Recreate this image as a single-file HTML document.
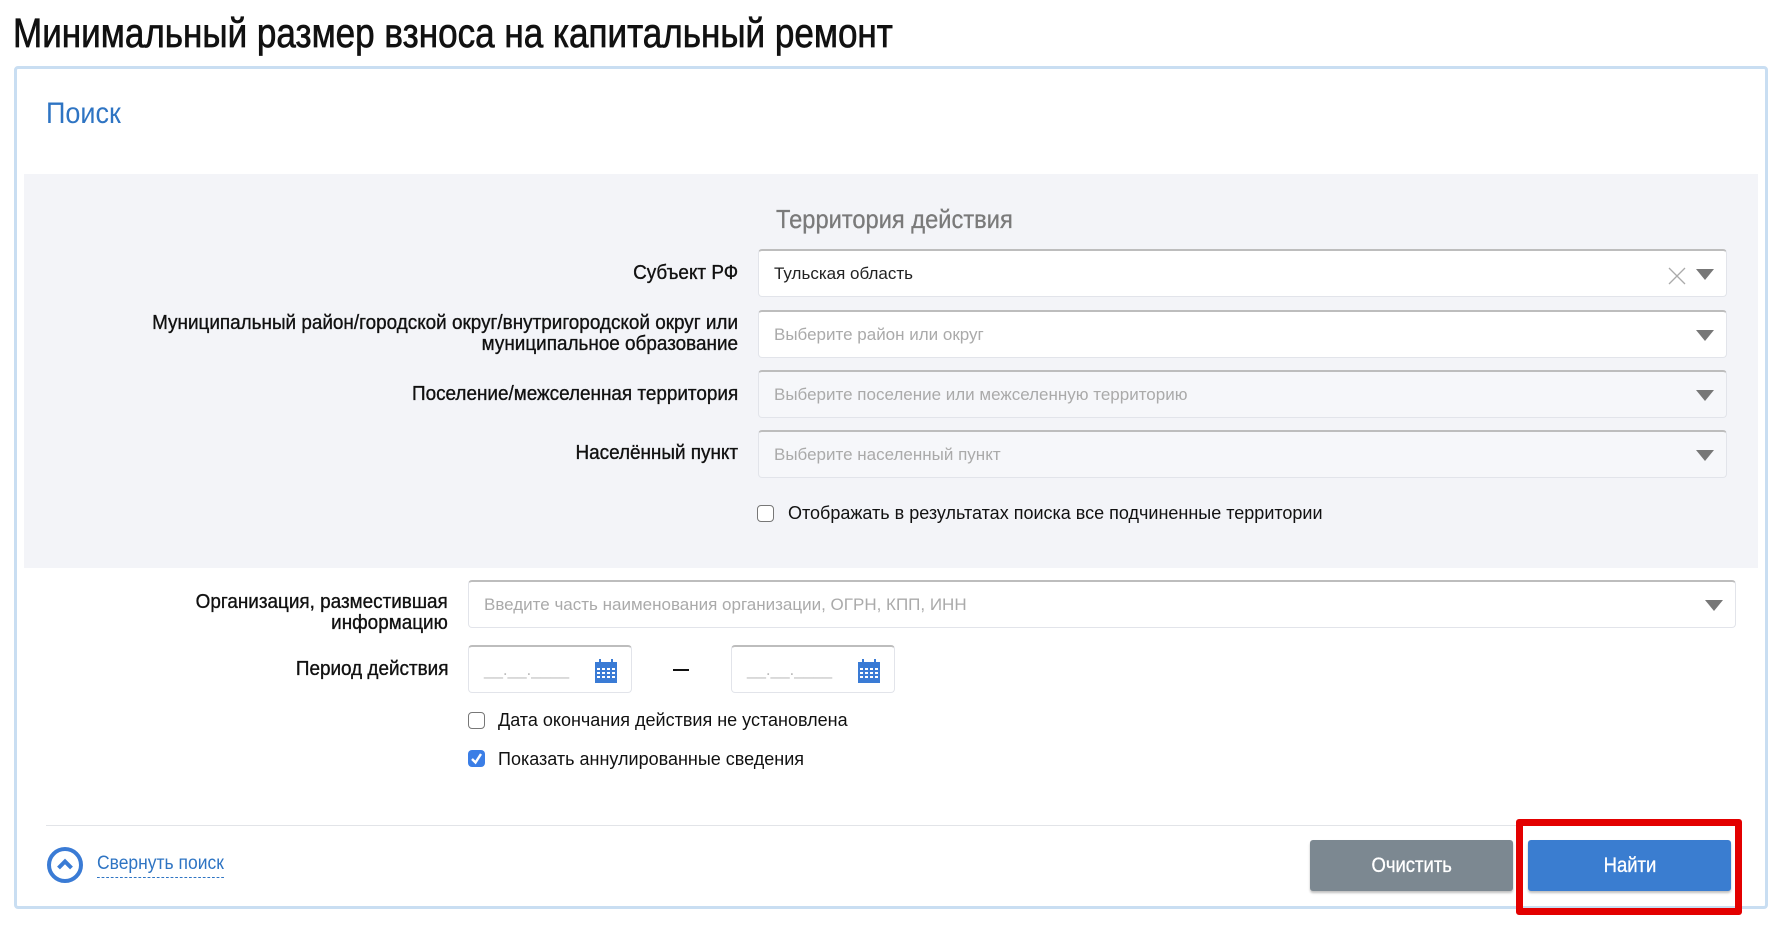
<!DOCTYPE html>
<html><head><meta charset="utf-8">
<style>
*{box-sizing:border-box;margin:0;padding:0}
body{width:1788px;height:930px;background:#fff;position:relative;overflow:hidden;font-family:"Liberation Sans",sans-serif;color:#111}
.abs{position:absolute}
.title{left:13px;top:8px;font-size:41px;line-height:50px;white-space:nowrap;transform:scaleX(0.855);transform-origin:left center;-webkit-text-stroke:0.7px #111}
.panel{left:14px;top:66px;width:1754px;height:843px;border:3px solid #c9def2;border-radius:4px}
.gray{left:24px;top:174px;width:1734px;height:394px;background:#f3f4f8}
.lbl{font-size:20px;text-align:right;line-height:21px;color:#111;-webkit-text-stroke:0.35px #111;transform:scaleX(0.945);transform-origin:right center;white-space:nowrap}
.inp{border:1px solid #e2e4ea;border-top:2px solid #bdbdbd;border-radius:4px;background:#fff;font-size:17px;color:#aaa;padding-left:15px;display:flex;align-items:center}
.tri{position:absolute;right:12px;top:50%;margin-top:-5px;width:0;height:0;border-left:9px solid transparent;border-right:9px solid transparent;border-top:11px solid #777}
.cb{width:17px;height:17px;border:1.5px solid #777;border-radius:4px;background:#fff}
.ct{font-size:18px;color:#111;white-space:nowrap}
.btn{color:#fff;font-size:21px;display:flex;align-items:center;justify-content:center;border-radius:3px;box-shadow:0 2px 2px rgba(0,0,0,.25)}
.btn span{transform:scaleX(0.88);-webkit-text-stroke:0.3px #fff}
</style></head><body>
<div class="abs title">Минимальный размер взноса на капитальный ремонт</div>
<div class="abs panel"></div>
<div class="abs" style="left:46px;top:97px;font-size:30px;color:#2e74c3;transform:scaleX(0.9);transform-origin:left center">Поиск</div>
<div class="abs gray"></div>
<div class="abs" style="left:776px;top:204px;font-size:26px;color:#7a7a7a;white-space:nowrap;transform:scaleX(0.91);transform-origin:left center;-webkit-text-stroke:0.3px #7a7a7a">Территория действия</div>

<div class="abs lbl" style="right:1050px;top:263px">Субъект РФ</div>
<div class="abs inp" style="left:758px;top:249px;width:969px;height:48px;color:#222">Тульская область
<svg class="abs" style="right:40px;top:16px" width="18" height="18" viewBox="0 0 18 18"><path d="M1 1L17 17M17 1L1 17" stroke="#aaa" stroke-width="1.3"/></svg><div class="tri"></div></div>

<div class="abs lbl" style="right:1050px;top:313px">Муниципальный район/городской округ/внутригородской округ или<br>муниципальное образование</div>
<div class="abs inp" style="left:758px;top:310px;width:969px;height:48px">Выберите район или округ<div class="tri"></div></div>

<div class="abs lbl" style="right:1050px;top:384px">Поселение/межселенная территория</div>
<div class="abs inp" style="left:758px;top:370px;width:969px;height:48px;background:#f6f7fa">Выберите поселение или межселенную территорию<div class="tri"></div></div>

<div class="abs lbl" style="right:1050px;top:443px">Населённый пункт</div>
<div class="abs inp" style="left:758px;top:430px;width:969px;height:48px;background:#f6f7fa">Выберите населенный пункт<div class="tri"></div></div>

<div class="abs cb" style="left:757px;top:505px"></div>
<div class="abs ct" style="left:788px;top:503px">Отображать в результатах поиска все подчиненные территории</div>

<div class="abs lbl" style="right:1340px;top:592px">Организация, разместившая<br>информацию</div>
<div class="abs inp" style="left:468px;top:580px;width:1268px;height:48px">Введите часть наименования организации, ОГРН, КПП, ИНН<div class="tri"></div></div>

<div class="abs lbl" style="right:1340px;top:659px">Период действия</div>
<div class="abs inp" style="left:468px;top:645px;width:164px;height:48px;color:#bbb">__.__.____
<svg class="abs" style="left:126px;top:12px" width="22" height="24" viewBox="0 0 22 24"><rect x="0" y="3" width="22" height="21" fill="#3a7bd5"/><rect x="4" y="0" width="2" height="5" fill="#3a7bd5"/><rect x="16" y="0" width="2" height="5" fill="#3a7bd5"/><g fill="#fff"><rect x="2" y="9" width="3" height="2"/><rect x="7" y="9" width="3" height="2"/><rect x="12" y="9" width="3" height="2"/><rect x="17" y="9" width="3" height="2"/><rect x="2" y="13" width="3" height="2"/><rect x="7" y="13" width="3" height="2"/><rect x="12" y="13" width="3" height="2"/><rect x="17" y="13" width="3" height="2"/><rect x="2" y="17" width="3" height="2"/><rect x="7" y="17" width="3" height="2"/><rect x="12" y="17" width="3" height="2"/><rect x="17" y="17" width="3" height="2"/></g></svg></div>
<div class="abs" style="left:673px;top:669px;width:16px;height:2px;background:#111"></div>
<div class="abs inp" style="left:731px;top:645px;width:164px;height:48px;color:#bbb">__.__.____
<svg class="abs" style="left:126px;top:12px" width="22" height="24" viewBox="0 0 22 24"><rect x="0" y="3" width="22" height="21" fill="#3a7bd5"/><rect x="4" y="0" width="2" height="5" fill="#3a7bd5"/><rect x="16" y="0" width="2" height="5" fill="#3a7bd5"/><g fill="#fff"><rect x="2" y="9" width="3" height="2"/><rect x="7" y="9" width="3" height="2"/><rect x="12" y="9" width="3" height="2"/><rect x="17" y="9" width="3" height="2"/><rect x="2" y="13" width="3" height="2"/><rect x="7" y="13" width="3" height="2"/><rect x="12" y="13" width="3" height="2"/><rect x="17" y="13" width="3" height="2"/><rect x="2" y="17" width="3" height="2"/><rect x="7" y="17" width="3" height="2"/><rect x="12" y="17" width="3" height="2"/><rect x="17" y="17" width="3" height="2"/></g></svg></div>

<div class="abs cb" style="left:468px;top:712px"></div>
<div class="abs ct" style="left:498px;top:710px">Дата окончания действия не установлена</div>
<div class="abs" style="left:468px;top:750px;width:17px;height:17px;border-radius:4px;background:#3b7ee6">
<svg width="17" height="17" viewBox="0 0 17 17"><path d="M4 9L7.5 12.5L13 4" stroke="#fff" stroke-width="2.4" fill="none"/></svg></div>
<div class="abs ct" style="left:498px;top:749px">Показать аннулированные сведения</div>

<div class="abs" style="left:46px;top:825px;width:1694px;height:1px;background:#e2e4e8"></div>
<svg class="abs" style="left:46px;top:846px" width="38" height="38" viewBox="0 0 38 38"><circle cx="19" cy="19" r="16" stroke="#3a7bd5" stroke-width="4" fill="none"/><path d="M12.5 22L19 15.5L25.5 22" stroke="#3a7bd5" stroke-width="4" fill="none"/></svg>
<div class="abs" style="left:97px;top:853px;font-size:19px;color:#2e74c3;border-bottom:1px dashed #2e74c3;padding-bottom:2px;white-space:nowrap;transform:scaleX(0.92);transform-origin:left center">Свернуть поиск</div>

<div class="abs btn" style="left:1310px;top:840px;width:203px;height:51px;background:#7c8891"><span>Очистить</span></div>
<div class="abs btn" style="left:1528px;top:840px;width:203px;height:51px;background:#3a7dd0"><span>Найти</span></div>
<div class="abs" style="left:1516px;top:819px;width:226px;height:96px;border:7px solid #e30000;border-radius:3px"></div>
</body></html>
